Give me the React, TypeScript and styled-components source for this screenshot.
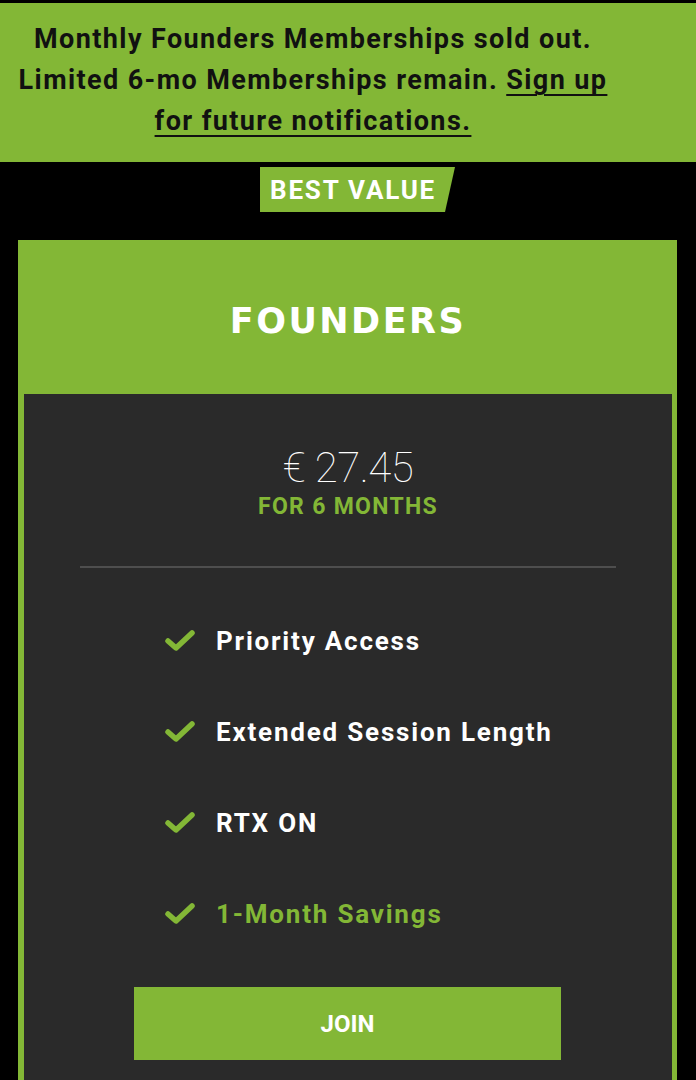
import { FC } from "react";
import styled, { createGlobalStyle } from "styled-components";

const green = "#83b736";
const panel = "#2a2a2a";

const GlobalStyle = createGlobalStyle`
  body {
    margin: 0;
    background: #000;
    font-family: Roboto, "Liberation Sans", sans-serif;
  }
`;

const Page = styled.div`
  padding-top: 3px;
  background: #000;
  min-height: 1080px;
`;

const Banner = styled.div`
  height: 159px;
  box-sizing: border-box;
  background: ${green};
  padding: 16px 70px 0 0;
  color: #111;
  text-align: center;
  font-size: 27px;
  font-weight: 700;
  line-height: 41px;
  letter-spacing: 1.4px;
`;

const Link = styled.a`
  color: inherit;
  text-decoration: underline;
  text-underline-offset: 5px;
  text-decoration-thickness: 2px;
`;

const TagRow = styled.div`
  display: flex;
  justify-content: center;
  padding: 5px 0 28px 19px;
`;

const Tag = styled.div`
  width: 195px;
  height: 45px;
  box-sizing: border-box;
  padding-left: 10px;
  display: flex;
  align-items: center;
  background: ${green};
  color: #fff;
  font-size: 26px;
  font-weight: 700;
  letter-spacing: 1.8px;
  clip-path: polygon(0 0, 100% 0, calc(100% - 10px) 100%, 0 100%);
`;

const Card = styled.div`
  margin: 0 19px 0 18px;
  padding: 0 5px 0 6px;
  background: ${green};
`;

const CardHead = styled.div`
  height: 154px;
  display: flex;
  align-items: center;
  justify-content: center;
  color: #fff;
  font-family: "DejaVu Sans", sans-serif;
  font-size: 35px;
  font-weight: 700;
  letter-spacing: 2.5px;
  padding-top: 8px;
  box-sizing: border-box;
`;

const CardBody = styled.div`
  background: ${panel};
  padding: 53px 0 40px;
`;

const Price = styled.div`
  text-align: center;
  color: #fff;
  font-size: 42px;
  font-weight: 100;
  line-height: 1;
  letter-spacing: -0.5px;
`;

const Term = styled.div`
  margin-top: 6px;
  text-align: center;
  color: ${green};
  font-size: 23px;
  font-weight: 700;
  line-height: 1;
  letter-spacing: 1.3px;
`;

const Divider = styled.hr`
  margin: 48px 56px 0;
  border: 0;
  height: 2px;
  background: #4e4e4e;
`;

const List = styled.ul`
  list-style: none;
  margin: 27px 0 0;
  padding: 0 0 0 141px;
`;

const Item = styled.li<{ highlight?: boolean }>`
  height: 91px;
  display: flex;
  align-items: center;
  gap: 21px;
  color: ${({ highlight }) => (highlight ? green : "#fff")};
  font-size: 26px;
  font-weight: 700;
  letter-spacing: 1.8px;
`;

const Button = styled.button`
  display: flex;
  align-items: center;
  justify-content: center;
  margin: 28px 111px 0 110px;
  width: calc(100% - 221px);
  height: 73px;
  border: 0;
  background: ${green};
  color: #fff;
  font-family: inherit;
  font-size: 24px;
  font-weight: 700;
`;

const Check: FC = () => (
  <svg width="30" height="22" viewBox="0 0 30 22">
    <polyline
      points="3,11 11,18 27,3"
      fill="none"
      stroke={green}
      strokeWidth="5.5"
      strokeLinecap="round"
      strokeLinejoin="round"
    />
  </svg>
);

const features = [
  { label: "Priority Access" },
  { label: "Extended Session Length" },
  { label: "RTX ON" },
  { label: "1-Month Savings", highlight: true },
];

export default function App() {
  return (
    <>
      <GlobalStyle />
      <Page>
        <Banner>
          Monthly Founders Memberships sold out.
          <br />
          Limited 6-mo Memberships remain. <Link href="#">Sign up</Link>
          <br />
          <Link href="#">for future notifications.</Link>
        </Banner>
        <TagRow>
          <Tag>BEST VALUE</Tag>
        </TagRow>
        <Card>
          <CardHead>FOUNDERS</CardHead>
          <CardBody>
            <Price>€ 27.45</Price>
            <Term>FOR 6 MONTHS</Term>
            <Divider />
            <List>
              {features.map((f) => (
                <Item key={f.label} highlight={f.highlight}>
                  <Check />
                  {f.label}
                </Item>
              ))}
            </List>
            <Button>JOIN</Button>
          </CardBody>
        </Card>
      </Page>
    </>
  );
}
